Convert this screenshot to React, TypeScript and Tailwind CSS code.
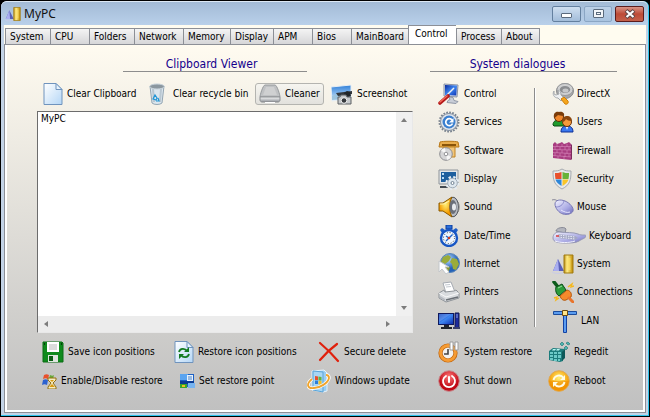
import { ReactNode, useState } from 'react';

const tabs = [
  { name: "System", width: "w-[45px]" },
  { name: "CPU", width: "w-[39px]" },
  { name: "Folders", width: "w-[45px]" },
  { name: "Network", width: "w-[49px]" },
  { name: "Memory", width: "w-[47px]" },
  { name: "Display", width: "w-[43px]" },
  { name: "APM", width: "w-[39px]" },
  { name: "Bios", width: "w-[39px]" },
  { name: "MainBoard", width: "w-[57px]" },
  { name: "Control", width: "w-[48px]" },
  { name: "Process", width: "w-[45px]" },
  { name: "About", width: "w-[39px]" },
];

const Svg = (props: {
  className?: string;
  box?: string;
  children: ReactNode;
}) => (
  <svg
    viewBox={props.box || "0 0 22 22"}
    className={`shrink-0 ${props.className || "size-[22px]"}`}
    aria-hidden="true"
  >
    {props.children}
  </svg>
);

// Gradients shared by all of the icons
const Gradients = () => (
  <svg className="absolute size-0" aria-hidden="true">
    <defs>
      <linearGradient id="gold" x2="1">
        <stop offset="0" stopColor="#b98a10" />
        <stop offset=".35" stopColor="#ffee8a" />
        <stop offset="1" stopColor="#c08a00" />
      </linearGradient>
      <linearGradient id="lilac" x2="1" y2="1">
        <stop offset="0" stopColor="#f4f4ff" />
        <stop offset=".6" stopColor="#aaaae4" />
        <stop offset="1" stopColor="#6a6ab8" />
      </linearGradient>
      <linearGradient id="screen" x2="1" y2="1">
        <stop offset="0" stopColor="#0a2a9c" />
        <stop offset=".5" stopColor="#3f86f0" />
        <stop offset="1" stopColor="#0b2fb0" />
      </linearGradient>
      <linearGradient id="paper" x2="1" y2="1">
        <stop offset="0" stopColor="#ffffff" />
        <stop offset="1" stopColor="#b4d6f6" />
      </linearGradient>
      <linearGradient id="steel" y2="1" x2="0">
        <stop offset="0" stopColor="#fafafa" />
        <stop offset="1" stopColor="#8e9298" />
      </linearGradient>
      <linearGradient id="sky" y2="1" x2="0">
        <stop offset="0" stopColor="#2f7fd8" />
        <stop offset="1" stopColor="#d4ecff" />
      </linearGradient>
      <radialGradient id="red" cx=".5" cy=".3">
        <stop offset="0" stopColor="#ff7a7a" />
        <stop offset="1" stopColor="#c00714" />
      </radialGradient>
      <radialGradient id="amber" cx=".5" cy=".35">
        <stop offset="0" stopColor="#fff27a" />
        <stop offset="1" stopColor="#f59a00" />
      </radialGradient>
      <radialGradient id="globe" cx=".4" cy=".3">
        <stop offset="0" stopColor="#b9dcff" />
        <stop offset="1" stopColor="#2462b8" />
      </radialGradient>
    </defs>
  </svg>
);

const SystemIcon = (props: { className?: string }) => (
  <Svg className={props.className}>
    <path d="M1 18 6 6l6 12Z" fill="#5a60b8" />
    <path d="m1 18 5-12 1 12Z" fill="#a9aef0" />
    <path d="M0 19c3 2 9 2 12 0" stroke="#c9cbe8" fill="none" />
    <path d="M12 2h9v18h-9Z" fill="url(#gold)" stroke="#a07a10" />
    <path d="M14.500 5h4v12h-4Z" fill="#ffe26a" opacity=".6" />
  </Svg>
);

const PageIcon = (props: { children?: ReactNode }) => (
  <Svg className="w-5 h-[22px]" box="0 0 20 22">
    <path d="M1 .500h12l6 6v15H1Z" fill="url(#paper)" stroke="#6f93bd" />
    <path d="M13 .500v6h6Z" fill="#e6f2fd" stroke="#6f93bd" strokeLinejoin="round" />
    {props.children}
  </Svg>
);

const BinIcon = () => (
  <Svg className="w-5 h-[22px]" box="0 0 20 22">
    <path d="M1 3h14l-2 17c-2 2-8 2-10 0Z" fill="#dbe6ee" stroke="#93a5b2" />
    <path d="m3 6 1 13h2L5 6Zm8 0-1 13h2l1-13Z" fill="#b9c7d1" />
    <ellipse cx="8" cy="3.500" rx="7.200" ry="2.500" fill="#8b979f" stroke="#c5d0d8" />
    <path d="m4 16 2-4 2 3-1 2Zm5-1 1 3H7" stroke="#1f95d6" strokeWidth="1.200" fill="none" />
  </Svg>
);

const DriveIcon = () => (
  <Svg>
    <path d="M6 2h10c2 0 5 10 5 12H1C1 12 4 2 6 2Z" fill="#bfc1c3" stroke="#96999c" />
    <path d="M7 4h8l3 8H4Z" fill="#cfd0d1" />
    <path d="M1 14h20v3c0 1-1 2-2 2H3c-1 0-2-1-2-2Z" fill="url(#steel)" stroke="#8a8d90" />
    <path d="M6 19h10v1H6Z" fill="#fff" />
  </Svg>
);

const ScreenshotIcon = () => (
  <Svg>
    <path d="m0 4 20-2v13L1 18Z" fill="url(#sky)" stroke="#e6eef5" />
    <path d="m1 13 6-3 5 3 8-4v6L1 17Z" fill="#9cc4df" />
    <path d="m5 10 8-1 8-1v3l-6 1-8 1Z" fill="#33373c" />
    <path d="m13 10 3-2 3 1 1 4-5 2Z" fill="#22262a" />
    <path d="M7 14h2l1-2h5l1 2h4v7H7Z" fill="#c6c9cc" stroke="#5d6165" />
    <circle cx="13" cy="17.500" r="2.800" fill="#35393d" stroke="#f2f2f2" />
  </Svg>
);

const ControlIcon = () => (
  <Svg>
    <path d="m6 1 14 1-1 12-13-1Z" fill="#d5dbe6" stroke="#8a93a5" />
    <path d="m7 2 12 .600-.800 10L7 12Z" fill="url(#screen)" />
    <path d="m11 14 4 .500 1 3 4 1-2 2-9-1 1-2 2-1Z" fill="#c9ced8" stroke="#9198a6" />
    <path d="m9 12 7-7" stroke="#f0f0f0" strokeWidth="1.500" />
    <path d="m2 20 8-7" stroke="#b51a1a" strokeWidth="3.600" strokeLinecap="round" />
    <path d="m2 19 7-6" stroke="#f26a5a" strokeWidth="1.500" strokeLinecap="round" />
  </Svg>
);

const ServicesIcon = () => (
  <Svg>
    <circle cx="11" cy="11" r="9.500" fill="none" stroke="#77818d" strokeWidth="2" strokeDasharray="1.700 1.280" />
    <circle cx="11" cy="11" r="8.500" fill="#dfe5ec" stroke="#8590a0" />
    <circle cx="11" cy="11" r="6.500" fill="#3a7fcf" />
    <path d="M14 9A3.500 3.500 0 1 0 14.500 12.500" stroke="#fff" strokeWidth="1.700" fill="none" />
    <path d="M15.500 7v4.500H11Z" fill="#fff" />
  </Svg>
);

const SoftwareIcon = () => (
  <Svg>
    <path d="M2 2c2-1 16-1 18 0l1 5H1Z" fill="#e9ad4c" stroke="#b97818" />
    <path d="M5 7h12v10H6Z" fill="#f1c67a" stroke="#c08325" />
    <path d="M4 4h14v2H4Z" fill="#8a5408" />
    <circle cx="8" cy="14" r="6.300" fill="#d6d6d8" stroke="#8e8e92" />
    <path d="M8 14 3 10.500A6 6 0 0 1 7 8Zm0 0 5 3a6 6 0 0 1-4 3Z" fill="#f6f6f6" />
    <circle cx="8" cy="14" r="1.800" fill="#fff" stroke="#929296" />
  </Svg>
);

const DisplayIcon = () => (
  <Svg>
    <path d="M1 2h19v14H1Z" fill="#e4e6e8" stroke="#8f959b" />
    <path d="M3 4h15v10H3Z" fill="#1e5f9e" />
    <path d="M4 5h2v2H4Zm0 4h2v2H4Z" fill="#b9dcf5" />
    <path d="M2 18h8v2H2Z" fill="#444a50" />
    <circle cx="14.500" cy="15" r="5.600" fill="none" stroke="#e6edf3" strokeWidth="3" strokeDasharray="2.300 2.098" />
    <circle cx="14.500" cy="15" r="4.800" fill="#dfe8ef" stroke="#a0acb8" />
    <circle cx="14.500" cy="15" r="1.500" fill="#fff" stroke="#6f8192" />
  </Svg>
);

const SoundIcon = () => (
  <Svg>
    <ellipse cx="15" cy="11" rx="5.500" ry="9.800" fill="#b9bdc4" stroke="#4e535c" />
    <path d="M1 7h4l9-6c-3 6-3 14 0 20l-9-6H1Z" fill="url(#amber)" stroke="#8a5a00" />
    <path d="M2 8h4l5-3" stroke="#fff3b0" fill="none" />
    <ellipse cx="15" cy="11" rx="3.500" ry="7" fill="#6a6f7a" />
    <ellipse cx="16" cy="11" rx="2" ry="3.500" fill="#e8eaee" />
    <path d="M20 6c1.500 2 1.500 8 0 10" stroke="#808080" fill="none" />
  </Svg>
);

const ClockIcon = () => (
  <Svg>
    <path d="M8 0h6v4H8Z" fill="#2c6fd8" stroke="#0a3c9c" />
    <path d="m2 5 2-2 3 2-3 3Zm18 0-2-2-3 2 3 3Z" fill="#1f5fc8" />
    <circle cx="11" cy="13" r="8" fill="#eef6ff" stroke="#1756c4" strokeWidth="2.400" />
    <circle cx="11" cy="13" r="5.500" fill="none" stroke="#3a3a3a" strokeDasharray="1 1.880" />
    <path d="m8 16 6.500-6.500M8 11l3 2" stroke="#1c62c8" strokeWidth="1.400" />
    <circle cx="11" cy="13" r="1.300" fill="#d03a1c" />
  </Svg>
);

const InternetIcon = () => (
  <Svg>
    <circle cx="12" cy="10" r="9.500" fill="url(#globe)" stroke="#5b86b8" />
    <path d="m5 4 5-2 3 2-2 4-4 3-4-2Zm9 1 5 1 2 5-3 6-3-1-1-5-2-2Z" fill="#9aac3a" />
    <path d="m8 13 4 1-1 4-3-1Z" fill="#8a9c34" />
    <path d="M1 8v11l3-3 4 5 3-2-4-5h4Z" fill="#fff" stroke="#c2c6ca" />
  </Svg>
);

const PrinterIcon = () => (
  <Svg>
    <path d="m5 2 8-1 4 10-9 1Z" fill="#fff" stroke="#a6abb2" />
    <path d="m7 4 5-.500M8 6l5-.500" stroke="#c3c8ce" />
    <path d="m1 12 5-3 1 2 9-1 2-1 3 3v5l-13 4-7-4Z" fill="#d9dcdf" stroke="#8e9398" />
    <path d="m1 12 7 4 13-4" fill="none" stroke="#f9f9f9" />
    <path d="m8 19 12-3" stroke="#6a6f75" strokeWidth="1.400" />
    <path d="m2 15 5 3v2l-5-3Z" fill="#b6bac0" />
  </Svg>
);

const WorkstationIcon = () => (
  <Svg>
    <path d="M17 3h4v15h-4Z" fill="#1d2a9c" stroke="#101850" />
    <path d="M18 5h2M18 7h2" stroke="#8fa6f0" />
    <path d="M0 3h16v12H0Z" fill="#10195c" />
    <path d="M1 4h14v10H1Z" fill="url(#screen)" />
    <path d="m1 4 12 0L1 12Z" fill="#7fb0ff" opacity=".45" />
    <path d="M6 15h5v2h3v2H3v-2h3Z" fill="#20242c" />
    <path d="M15 18h7" stroke="#3a3f6a" strokeWidth="2" />
  </Svg>
);

const DirectXIcon = () => (
  <Svg>
    <ellipse cx="13" cy="8" rx="8.500" ry="7.500" fill="#a6a7a9" stroke="#8a8c8f" />
    <ellipse cx="13" cy="6.500" rx="8" ry="6" fill="#cfd0d1" stroke="#98999b" />
    <ellipse cx="13" cy="6.500" rx="5.200" ry="3.600" fill="#8b8d90" />
    <ellipse cx="13.500" cy="7.500" rx="3" ry="2" fill="#c6c7c9" />
    <path d="M2 8c-2 3 0 7 4 7l3 3 3-3-3-3c0-3-1-4-3-5l1 4-3 1-2-1Z" fill="#eef0f2" stroke="#a6aaae" />
    <path d="m9 16 3-2 4 4c1 2-1 4-3 3Z" fill="#f5a51c" stroke="#d07f08" />
  </Svg>
);

const UsersIcon = () => (
  <Svg>
    <path d="M1 14c0-4 3-5 6-5s6 1 6 6H2Z" fill="#1f9a2c" stroke="#0a4a12" />
    <circle cx="7" cy="6" r="4.500" fill="#f0872c" stroke="#5c2c08" />
    <path d="M2 7C1 2 4 0 7 1c3-1 6 1 5 4-3 0-5-1-6-1-1 1-2 2-4 3Z" fill="#7a3c0a" />
    <path d="M9 21c0-5 3-6 6-6s6 1 6 6Z" fill="#3a78f0" stroke="#0d2f94" />
    <circle cx="15" cy="11" r="4.500" fill="#f59a3c" stroke="#6c330a" />
    <path d="M10 11c0-4 2-6 5-6s5 2 5 5c-3 0-5-1-6-2-1 2-2 3-4 3Z" fill="#8a460e" />
    <path d="m14 16 1 3 1-3Z" fill="#fff" />
  </Svg>
);

const FirewallIcon = () => (
  <Svg>
    <path d="m1 4 2-2 2 2 3-1 2-1 2 2 3-1 2-1 2 2v16L1 18Z" fill="#a83c80" />
    <path d="M1 6.500h18M1 9.500l18 .500M1 12.500l18 1M1 15.500l18 1.500M5 4v3m5-3v3m5-3v3M3 7v3m5-3v3m5-3v3m4-3v3M5 10v3m5-3v3m5-3v4M3 13v3m5-3v3m5-3v4m4-3v3M6 16v3m6-3v3" stroke="#d88abc" strokeWidth=".600" />
    <path d="m19 4 1 1v14l-1 1Z" fill="#7a2a5c" />
  </Svg>
);

const SecurityIcon = () => (
  <Svg>
    <path d="M10 1c3 2 6 2 9 2 0 9-1 14-9 18C2 17 1 12 1 3c3 0 6 0 9-2Z" fill="#e6e8ea" stroke="#a6aaaf" />
    <path d="M9.500 4v7H3.500C3 9 3 7 3 5c2 0 4 0 6.500-1Z" fill="#e8502c" />
    <path d="M10.500 4c2 1 4 1 6.500 1 0 2 0 4-.500 6h-6Z" fill="#67b238" />
    <path d="M9.500 11.500V18c-3-2-5.500-4-6-6.500Z" fill="#2c86d8" />
    <path d="M10.500 11.500h6c-.500 2.500-3 4.500-6 6.500Z" fill="#f9c528" />
  </Svg>
);

const MouseIcon = () => (
  <Svg>
    <path d="M0 4c3-1 5 0 7 3" stroke="#8a8a98" fill="none" />
    <path d="M3 8c0-4 5-5 10-3 5 2 9 7 8 10s-6 4-10 3C7 17 3 12 3 8Z" fill="url(#lilac)" stroke="#7878b4" />
    <path d="M4 11c4 0 7-2 8-6" stroke="#8c8ccc" fill="none" />
    <path d="M9 14c3 2 6 3 9 2" stroke="#e8e8ff" fill="none" />
  </Svg>
);

const KeyboardIcon = () => (
  <Svg className="w-[34px] h-[22px]" box="0 0 34 22">
    <path d="M4 6c0-3 8-5 10-2l-1 4Z" fill="#b4b6be" stroke="#888a96" />
    <path d="M1 13c0-4 3-6 6-6 8 1 14 0 19 2 4 2 8 0 8 2s-4 3-7 5-9 2-14 2C6 18 1 17 1 13Z" fill="url(#lilac)" stroke="#9698b2" />
    <path d="m6 9 17 2 3 2-4 2L6 13Z" fill="#a3a7c2" />
    <path d="m6 10 17 2M6 12l17 2" stroke="#eceefc" strokeDasharray="1.500 1" />
    <path d="M4 11h3" stroke="#d83a3a" strokeWidth="1.500" />
    <path d="M3 16c5 2 14 2 20 0" stroke="#f4f4ff" fill="none" />
  </Svg>
);

const ConnectionsIcon = () => (
  <Svg>
    <path d="m2 1 4 5" stroke="#0d5c1c" strokeWidth="3.500" strokeLinecap="round" />
    <path d="m4 6 6-3 4 6-7 6C4 13 3 9 4 6Z" fill="#2c9c3c" stroke="#0c4c18" />
    <path d="m6 7 4-2" stroke="#9ce0a4" />
    <path d="m8 15 7-6c4 1 5 4 4 7l-5 3c-3 1-5-1-6-4Z" fill="#f58a2c" stroke="#b4580c" />
    <path d="m17 17 4 4" stroke="#e8742c" strokeWidth="3" strokeLinecap="round" />
    <path d="m16 6 4-3-1 3 3-1M2 17l3-1-1 3 3-2" stroke="#f5b81c" strokeWidth="1.400" fill="none" />
  </Svg>
);

const LanIcon = () => (
  <Svg className="w-[26px] h-6" box="0 0 26 24">
    <path d="M1.500 2.500h23v3h-23Z" fill="#5a9cf0" stroke="#1c4c9c" />
    <path d="M11.500 6h3v17.500h-3Z" fill="#5a9cf0" stroke="#1242a4" />
    <path d="M10.500 1.500h5v5h-5Z" fill="#ffe58a" stroke="#6c4c10" />
  </Svg>
);

const FloppyIcon = () => (
  <Svg>
    <path d="M1 1h19l1 1v19H1Z" fill="#0f8a1c" stroke="#0a6c14" />
    <path d="M5 1h12v10H5Z" fill="#fff" />
    <path d="M7 4h8M7 6h8M7 8h8" stroke="#b7b7b7" />
    <path d="M6 14h10v7H6Z" fill="#dfe6df" />
    <path d="M7 15h4v5H7Z" fill="#0b5c14" />
    <path d="M2 2h1v2H2Zm17 0h1v2h-1Z" fill="#073c0c" />
  </Svg>
);

const DeleteIcon = () => (
  <Svg>
    <path d="M2 2c6 5 12 11 18 18M19 3C12 8 7 13 2 19" stroke="#e0200c" strokeWidth="2.200" strokeLinecap="round" fill="none" />
  </Svg>
);

const EnableRestoreIcon = () => (
  <Svg className="size-4" box="0 0 16 16">
    <path d="M3 2c2-1 3-1 5 0L7 6C5 5 4 5 2 6Z" fill="#e8502c" />
    <path d="M9 2c2 1 3 1 4 0l-1 4c-2 1-3 1-4 0Z" fill="#67a838" />
    <path d="M2 7c2-1 3-1 5 0l-1 5c-2-1-3-1-5 0Z" fill="#2c62d0" />
    <path d="M7 5h8v2l-3 3 3 4v2H7v-2l3-4-3-3Z" fill="#f5ecc4" stroke="#94700c" />
    <path d="M9 7h4l-2 2Zm-1 7 3-3 3 3Z" fill="#d89a10" />
  </Svg>
);

const RestorePointIcon = () => (
  <Svg className="size-4" box="0 0 16 16">
    <path d="M1 1h14v13H1Z" fill="#1c60c4" />
    <path d="M1 1h8v6H1Z" fill="#5aa4f0" />
    <path d="M8 2h6v6H8Z" fill="#e8f2fc" />
    <path d="M9 4h4M9 6h4" stroke="#4c84c8" />
    <path d="M1 8h14v3H1Z" fill="#0c3c94" />
    <path d="M1 11h7v4H1Z" fill="#3ca42c" />
    <path d="M3 12h3v2H3Z" fill="#f0c020" />
    <path d="M9 10h7v5H9Z" fill="#78b4f0" />
  </Svg>
);

const UpdateIcon = () => (
  <Svg className="size-6" box="0 0 24 24">
    <path d="m5 2 12-1 3 3v18l-4 1-11-2Z" fill="#9ccdf0" stroke="#e4f2fb" />
    <path d="m6 2 10 1v20L6 21Z" fill="#a9d6f4" stroke="#5aa4d8" />
    <path d="m8 7 3 .500v3.500H8Z" fill="#e8502c" />
    <path d="m11.500 7.500 3 .500v3.500h-3Z" fill="#67b238" />
    <path d="M8 11.500h3V15H8Z" fill="#2c7cd8" />
    <path d="M11.500 12h3v3.500h-3Z" fill="#f5c020" />
    <path d="M5 10c-6 5-5 10 2 9 6 0 14-5 15-10 0-2-1-3-3-3" stroke="#fff" strokeWidth="3.500" fill="none" />
    <path d="M5 10c-6 5-5 10 2 9 6 0 14-5 15-10 0-2-1-3-3-3" stroke="#f0a42c" strokeWidth="1.800" fill="none" />
  </Svg>
);

const RestoreIcon = () => (
  <Svg>
    <circle cx="10" cy="12" r="7.500" fill="#f2f2f0" stroke="#c0640c" strokeWidth="4.200" />
    <circle cx="10" cy="12" r="7.500" fill="none" stroke="#f59c34" strokeWidth="2.800" />
    <path d="M10 8v5H6" stroke="#444" strokeWidth="1.600" fill="none" />
    <path d="M12 1h3v8h-3Zm5 0h3v8h-3Z" fill="#fff" stroke="#9c9c9c" />
  </Svg>
);

const RegeditIcon = () => (
  <Svg>
    <path d="m1 10 4-3 12 1-2 3v9l-3 1-11-2Z" fill="#1c7c7c" />
    <path d="M2 11h3v2H2Zm4 0h3v2H6Zm4 0h3v2h-3ZM2 14h3v2H2Zm4 0h3v3H6Zm4 0h3v3h-3ZM2 17h3v2H2Zm4 1h3v2H6Zm4 0h2v2h-2Z" fill="#6ccac8" />
    <path d="m5 8 3 0-1 1.500H4Zm4 0h3l-1 1.500H8Z" fill="#b6f4f0" />
    <path d="m14 11 3-3v9l-3 3Z" fill="#0e5858" />
    <path d="m12 3 2-2 2 2-2 2Zm6-1 2-1 2 2-2 1Zm-2 5 2-2 2 2-2 2Z" fill="#4cb4b0" stroke="#1c7070" strokeWidth=".600" />
  </Svg>
);

const ShutdownIcon = () => (
  <Svg>
    <circle cx="11" cy="11" r="10.300" fill="url(#red)" stroke="#c8888c" />
    <path d="M8 6a6 6 0 1 0 6 0" stroke="#fff" strokeWidth="1.800" fill="none" strokeLinecap="round" />
    <path d="M11 7v5" stroke="#fff" strokeWidth="2" strokeLinecap="round" />
  </Svg>
);

const RebootIcon = () => (
  <Svg>
    <circle cx="11" cy="11" r="10.300" fill="url(#amber)" stroke="#e0a850" />
    <path d="M1 11h20a10 10 0 0 1-20 0Z" fill="#f08c00" opacity=".45" />
    <path d="M5.500 10a5.500 5.500 0 0 1 10-2M16.500 12a5.500 5.500 0 0 1-10 2" stroke="#fffbe6" strokeWidth="1.900" fill="none" />
    <path d="M17 5v5h-5ZM5 17v-5h5Z" fill="#fffbe6" />
  </Svg>
);

const ToolButton = (props: {
  icon: ReactNode;
  label: string;
  framed?: boolean;
  gap?: string;
}) => (
  <button
    className={`flex items-center whitespace-nowrap justify-self-start ${props.gap || "gap-1"} ${
      props.framed
        ? "px-[3px] h-[22px] border border-[#b4b4b0] rounded-[3px] bg-linear-to-b from-[#f6f5f0] to-[#e2e1dd]"
        : ""
    }`}
  >
    {props.icon}
    {props.label}
  </button>
);

const dialogs = [
  { label: "Control", icon: <ControlIcon /> },
  { label: "DirectX", icon: <DirectXIcon /> },
  { label: "Services", icon: <ServicesIcon /> },
  { label: "Users", icon: <UsersIcon /> },
  { label: "Software", icon: <SoftwareIcon /> },
  { label: "Firewall", icon: <FirewallIcon /> },
  { label: "Display", icon: <DisplayIcon /> },
  { label: "Security", icon: <SecurityIcon /> },
  { label: "Sound", icon: <SoundIcon /> },
  { label: "Mouse", icon: <MouseIcon /> },
  { label: "Date/Time", icon: <ClockIcon /> },
  { label: "Keyboard", icon: <KeyboardIcon /> },
  { label: "Internet", icon: <InternetIcon /> },
  { label: "System", icon: <SystemIcon /> },
  { label: "Printers", icon: <PrinterIcon /> },
  { label: "Connections", icon: <ConnectionsIcon /> },
  { label: "Workstation", icon: <WorkstationIcon /> },
  { label: "LAN", icon: <LanIcon /> },
];

const left = dialogs.filter((_, i) => i % 2 === 0);
const right = dialogs.filter((_, i) => i % 2 === 1);

const Arrow = (props: { d: string; label: string }) => (
  <button
    aria-label={props.label}
    className="flex items-center justify-center size-4 shrink-0"
  >
    <Svg className="size-2" box="0 0 8 8">
      <path d={props.d} fill="#7c7c7c" />
    </Svg>
  </button>
);

const TitleBar = () => (
  <div className="flex items-center h-6 pl-1 pr-1 bg-linear-to-b from-[#a3bbd6] to-[#b9d0ea] border-t border-[#dce8f4] rounded-t-md">
    <SystemIcon className="size-4" />
    <h1 className="flex-1 pl-[3px] font-['Noto_Sans'] text-[12px] text-[#111]">MyPC</h1>
    <div className="flex gap-[3px]">
      <button
        aria-label="Minimize"
        className="flex items-center justify-center w-[29px] h-4 border border-[#64809f] rounded-[2px] bg-linear-to-b from-[#cfdff0] to-[#a3bdda]"
      >
        <span className="w-[11px] h-[5px] mt-[3px] bg-white border border-[#5b6a7c] rounded-[1px]" />
      </button>
      <button
        aria-label="Maximize"
        className="flex items-center justify-center w-[28px] h-4 border border-[#8ba6c4] rounded-[2px] bg-linear-to-b from-[#bdd1e7] to-[#a9c3df]"
      >
        <span className="flex items-center justify-center w-[11px] h-[9px] bg-[#f2f5f8] border border-[#5b6a7c] rounded-[1px]">
          <span className="w-[5px] h-[3px] border border-[#5b6a7c]" />
        </span>
      </button>
      <button
        aria-label="Close"
        className="flex items-center justify-center w-[29px] h-4 border border-[#5c1c1c] rounded-[2px] bg-linear-to-b from-[#d99488] via-[#bd4a36] to-[#c4604a]"
      >
        <Svg className="w-3 h-[10px]" box="0 0 12 10">
          <path d="m2 1.500 8 7m0-7-8 7" stroke="#5c4444" strokeWidth="4" />
          <path d="m2.500 2 7 6m0-6-7 6" stroke="#fff" strokeWidth="2.200" />
        </Svg>
      </button>
    </div>
  </div>
);

const Heading = (props: { children: string; className: string }) => (
  <h2
    className={`h-4 border-b border-[#8d8d8d] text-[12px] leading-4 text-center text-[#14008c] ${props.className}`}
  >
    {props.children}
  </h2>
);

const App = () => {
  const [active, setActive] = useState("Control");

  return (
    <div className="min-h-screen bg-black font-['DejaVu_Sans_Condensed','DejaVu_Sans',sans-serif] text-[10px] leading-[14px] text-black flex">
      <Gradients />
      <div className="flex flex-col flex-1 m-px border-r border-b border-[#2fc4ec] rounded-t-md bg-[#c3d3e6]">
        <TitleBar />
        <div className="flex flex-col flex-1 ml-[3px] mr-[2px] mb-[2px] bg-[#fffcf0]">
          <div role="tablist" className="flex items-end h-[19px] pl-px">
            {tabs.map((tab) => (
              <button
                key={tab.name}
                role="tab"
                aria-selected={tab.name === active}
                onClick={() => setActive(tab.name)}
                className={`border-[#8c8f96] border-l border-t last:border-r text-left whitespace-nowrap ${tab.width} ${
                  tab.name === active
                    ? "h-[19px] bg-white pb-[3px] pl-1.5"
                    : "h-4 pl-1 bg-linear-to-b from-[#f4f4f4] to-[#d6d6d8]"
                }`}
              >
                {tab.name}
              </button>
            ))}
          </div>
          <div className="flex flex-1 border border-[#8c8f96] bg-white p-[2px] pt-0">
            <div className="grid flex-1 grid-cols-[1fr_213px] grid-rows-[35px_1fr_65px] bg-linear-to-b from-[#fffbf0] to-[#c0c0c0] pb-3">
              <div className="pt-[11px] pl-[30px] pr-[38px]">
                <Heading className="w-[184px] mx-auto pr-[6px]">Clipboard Viewer</Heading>
              </div>
              <div className="pt-[11px]">
                <Heading className="w-[187px] pr-3">System dialogues</Heading>
              </div>

              <div className="flex flex-col pl-[30px] pr-[17px]">
                <div className="grid grid-cols-[106px_106px_76px_1fr] items-center h-7 pl-[6px] mb-[3px]">
                  <ToolButton label="Clear Clipboard" icon={<PageIcon />} />
                  <ToolButton label="Clear recycle bin" icon={<BinIcon />} />
                  <ToolButton label="Cleaner" icon={<DriveIcon />} framed />
                  <ToolButton label="Screenshot" icon={<ScreenshotIcon />} />
                </div>
                <div className="flex flex-col flex-1 bg-white border border-t-[#6c6c6c] border-l-[#6c6c6c] border-r-[#e8e8e8] border-b-[#e8e8e8]">
                  <div className="flex flex-1">
                    <textarea
                      aria-label="Clipboard contents"
                      defaultValue="MyPC"
                      className="flex-1 px-[3px] overflow-hidden bg-white outline-none resize-none"
                    />
                    <div className="flex flex-col justify-between w-4 bg-[#f0f0f0]">
                      <Arrow label="Scroll up" d="m1 6 3-4 3 4Z" />
                      <Arrow label="Scroll down" d="m1 2 3 4 3-4Z" />
                    </div>
                  </div>
                  <div className="flex justify-between h-4 pr-4 bg-[#ececec]">
                    <Arrow label="Scroll left" d="M6 1 2 4l4 3Z" />
                    <Arrow label="Scroll right" d="m2 1 4 3-4 3Z" />
                  </div>
                </div>
              </div>
              <div className="flex pl-2 -mb-[2px]">
                <div className="grid w-24 grid-rows-9">
                  {left.map((d) => (
                    <ToolButton key={d.label} gap="gap-1" {...d} />
                  ))}
                </div>
                <div className="w-[2px] my-2 mr-4 border-l border-l-[#8c8c8c] border-r border-r-white" />
                <div className="grid grid-rows-9">
                  {right.map((d) => (
                    <ToolButton key={d.label} gap="gap-[3px]" {...d} />
                  ))}
                </div>
              </div>

              <div className="flex flex-col pt-1">
                <div className="grid grid-cols-[132px_144px_1fr] items-center h-[29px] pl-[35px]">
                  <ToolButton label="Save icon positions" icon={<FloppyIcon />} />
                  <ToolButton
                    label="Restore icon positions"
                    icon={
                      <PageIcon>
                        <path d="M5 11c1-4 6-4 8-1M15 13c-1 4-6 4-8 1" stroke="#137a22" strokeWidth="1.800" fill="none" />
                        <path d="M15 6v5h-5ZM5 18v-5h5Z" fill="#137a22" />
                      </PageIcon>
                    }
                  />
                  <ToolButton label="Secure delete" icon={<DeleteIcon />} />
                </div>
                <div className="grid grid-cols-[138px_128px_1fr] items-center h-[29px] pl-[34px]">
                  <ToolButton label="Enable/Disable restore" icon={<EnableRestoreIcon />} />
                  <ToolButton label="Set restore point" icon={<RestorePointIcon />} />
                  <ToolButton label="Windows update" icon={<UpdateIcon />} />
                </div>
              </div>
              <div className="grid grid-cols-[110px_1fr] auto-rows-[29px] content-start pt-1 pl-2">
                <ToolButton label="System restore" icon={<RestoreIcon />} />
                <ToolButton label="Regedit" icon={<RegeditIcon />} />
                <ToolButton label="Shut down" icon={<ShutdownIcon />} />
                <ToolButton label="Reboot" icon={<RebootIcon />} />
              </div>
            </div>
          </div>
        </div>
      </div>
    </div>
  );
};

export default App;
